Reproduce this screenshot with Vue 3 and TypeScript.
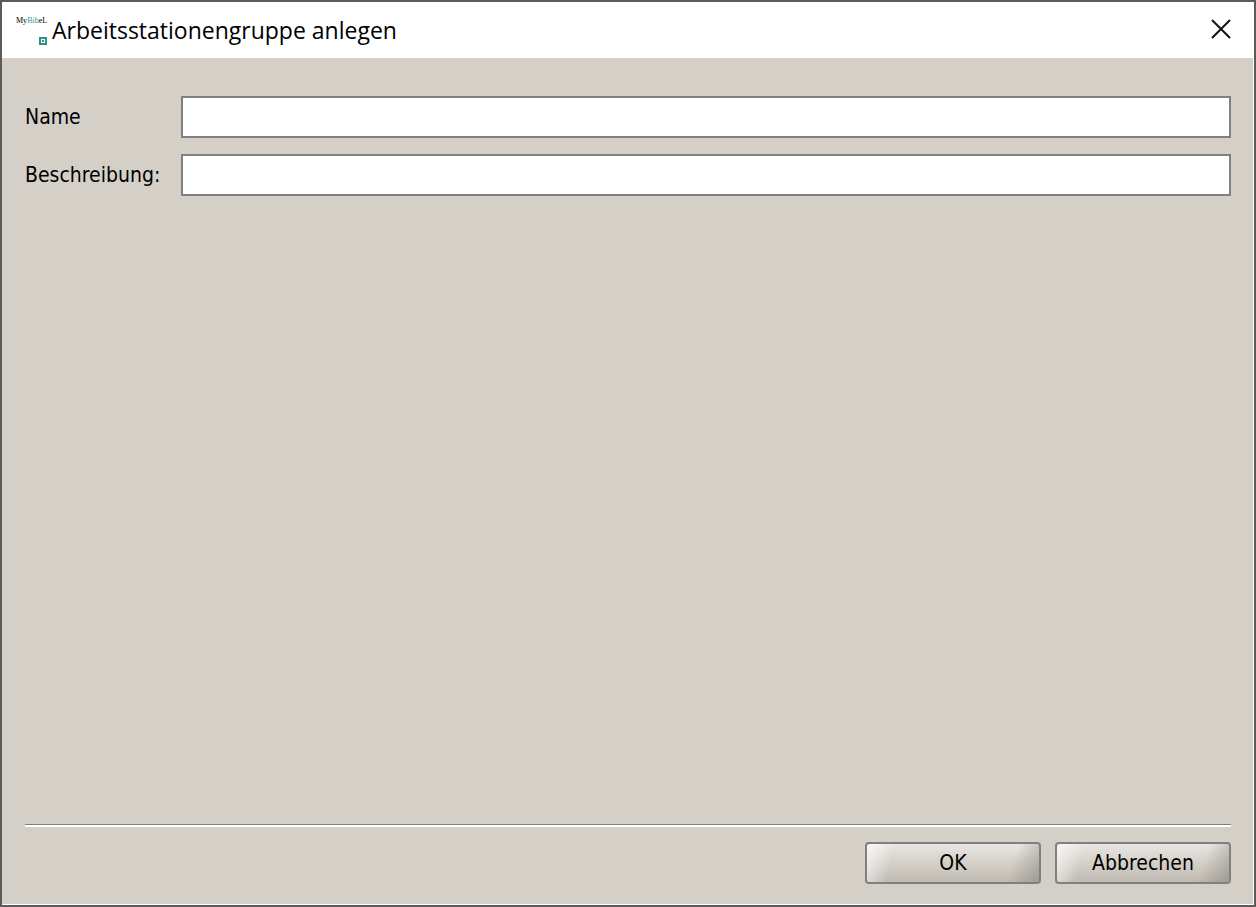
<script setup lang="ts">
import { ref } from 'vue'

const name = ref('')
const description = ref('')
</script>

<template>
  <main class="dialog" role="dialog" aria-labelledby="dialog-title">
    <header class="titlebar">
      <svg class="logo" viewBox="0 0 32 32" aria-hidden="true">
        <text class="logo-text" x="0" y="9">My<tspan class="teal">Bib</tspan>eL</text>
        <rect x="23" y="23" width="8" height="8" fill="#2f8f86" />
        <rect x="25" y="25" width="4" height="4" fill="#fff" />
        <rect x="26" y="26" width="2" height="2" fill="#2f8f86" />
      </svg>
      <h1 id="dialog-title">Arbeitsstationengruppe anlegen</h1>
      <button class="close" type="button" aria-label="Schließen">
        <svg viewBox="0 0 20 20" aria-hidden="true">
          <path d="M1 1L19 19M19 1L1 19" />
        </svg>
      </button>
    </header>
    <form class="content" @submit.prevent>
      <div class="fields">
        <label for="name">Name</label>
        <input id="name" v-model="name" type="text" />
        <label for="description">Beschreibung:</label>
        <input id="description" v-model="description" type="text" />
      </div>
      <footer class="actions">
        <button class="action" type="submit">OK</button>
        <button class="action" type="button">Abbrechen</button>
      </footer>
    </form>
  </main>
</template>

<style>
body {
  margin: 0;
}
</style>

<style scoped>
.dialog {
  box-sizing: border-box;
  display: flex;
  flex-direction: column;
  min-height: 100vh;
  border: 2px solid #5c5b5a;
  background: #d4d0c8;
  color: #000;
  font-family: Tahoma, "DejaVu Sans Condensed", "Noto Sans", sans-serif;
}
.titlebar {
  display: flex;
  align-items: center;
  height: 56px;
  padding-left: 14px;
  background: #fff;
}
.logo {
  width: 32px;
  height: 32px;
  flex: none;
}
.logo-text {
  font-family: "Liberation Serif", serif;
  font-size: 8px;
  fill: #000;
}
.teal {
  fill: #259c96;
}
h1 {
  flex: 1;
  margin: 0;
  padding-left: 4px;
  font-family: "Open Sans", sans-serif;
  font-size: 23px;
  font-weight: 400;
  line-height: 32px;
}
.close {
  display: flex;
  align-items: center;
  justify-content: center;
  width: 66px;
  height: 54px;
  align-self: flex-start;
  padding: 0;
  border: 0;
  background: none;
}
.close svg {
  width: 20px;
  height: 20px;
  fill: none;
  stroke: #111;
  stroke-width: 2;
}
.content {
  display: flex;
  flex: 1;
  flex-direction: column;
  justify-content: space-between;
  padding: 38px 22px 20px 23px;
  border-right: 1px solid #fff;
  border-bottom: 1px solid #fff;
}
.fields {
  display: grid;
  grid-template-columns: 140px 1fr;
  align-items: center;
  gap: 16px;
}
label {
  font-size: 21px;
  line-height: 28px;
  white-space: nowrap;
}
input {
  box-sizing: border-box;
  width: 100%;
  min-width: 0;
  height: 42px;
  padding: 0 8px;
  border: 2px solid #808080;
  border-radius: 0;
  background: #fff;
  font: inherit;
  font-size: 21px;
  outline: none;
}
.actions {
  display: flex;
  justify-content: flex-end;
  gap: 14px;
  padding-top: 17px;
  border-top: 1px solid #808080;
  box-shadow: inset 0 2px #fff;
}
.action {
  width: 176px;
  height: 42px;
  padding: 0;
  border: 2px solid #808080;
  border-radius: 4px;
  background:
    linear-gradient(105deg, rgb(255 255 255 / 70%), transparent 16%) padding-box,
    linear-gradient(290deg, rgb(128 124 116 / 50%), transparent 18%) padding-box,
    linear-gradient(#e8e6e4, #d4d0c8 50%, #bfbbb3) padding-box;
  color: #000;
  font-family: inherit;
  font-size: 21px;
  line-height: 28px;
}
</style>
